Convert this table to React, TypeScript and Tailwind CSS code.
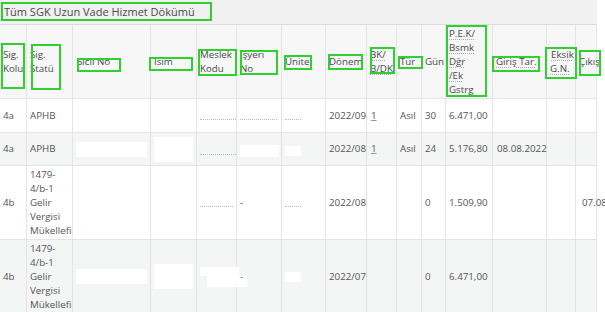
import React from "react";

const cols =
  "grid grid-cols-[27px_46px_78px_46px_40px_45px_44px_41px_30px_25px_24px_47px_54px_29px_21px]";

const cell = "border-r border-b border-[#e4e4e4] px-[3px] flex items-center";

// green annotation boxes drawn over the screenshot
const marks = [
  { x: 1, y: 2, w: 211, h: 19 },
  { x: 1, y: 43, w: 24, h: 46 },
  { x: 31, y: 44, w: 30, h: 46 },
  { x: 77, y: 58, w: 44, h: 14 },
  { x: 149, y: 57, w: 44, h: 14 },
  { x: 198, y: 49, w: 39, h: 27 },
  { x: 240, y: 50, w: 38, h: 25 },
  { x: 284, y: 55, w: 28, h: 15 },
  { x: 328, y: 54, w: 35, h: 16 },
  { x: 370, y: 47, w: 25, h: 27 },
  { x: 398, y: 56, w: 25, h: 13 },
  { x: 446, y: 25, w: 41, h: 72 },
  { x: 492, y: 56, w: 48, h: 16 },
  { x: 545, y: 47, w: 32, h: 32 },
  { x: 579, y: 50, w: 22, h: 26 },
];

const dotted = "underline decoration-dotted decoration-[#aaa] underline-offset-2";

const headers: React.ReactNode[] = [
  <>Sig.<br />Kolu</>,
  <>Sig.<br />Statü</>,
  <span className="pl-[1px]">Sicil No</span>,
  "Isim",
  <>Meslek<br />Kodu</>,
  <>İşyeri<br />No</>,
  "Ünite",
  "Dönem",
  <span className={dotted}>BK/<br />B/DK</span>,
  <span className={dotted}>Tür</span>,
  "Gün",
  <span className={dotted}>P.E.K/<br />Bsmk<br />Dğr<br />/Ek<br />Gstrg</span>,
  <span className={`${dotted} whitespace-nowrap`}>Giriş Tar.</span>,
  <span className={`${dotted} pl-[1px]`}>Eksik<br />G.N.</span>,
  <span className="whitespace-nowrap">Çıkış</span>,
];

const Dots = ({ w }: { w: number }) => (
  <div className="border-b border-dotted border-[#bbb]" style={{ width: w }} />
);

const Blank = ({ w, h }: { w: number; h: number }) => (
  <div className="bg-white" style={{ width: w, height: h }} />
);

const statu4b = (
  <>1479-<br />4/b-1<br />Gelir<br />Vergisi<br />Mükellefi</>
);

type Row = { h: number; gray: boolean; cells: React.ReactNode[] };

const rows: Row[] = [
  {
    h: 34,
    gray: false,
    cells: [
      "4a",
      "APHB",
      "",
      "",
      <div className="pt-[8px]"><Dots w={36} /></div>,
      <div className="pt-[8px]"><Dots w={37} /></div>,
      <div className="pt-[8px]"><Dots w={16} /></div>,
      "2022/09",
      <span className="underline decoration-[#999] pl-[1px]">1</span>,
      "Asıl",
      "30",
      "6.471,00",
      "",
      "",
      "",
    ],
  },
  {
    h: 33,
    gray: true,
    cells: [
      "4a",
      "APHB",
      <Blank w={73} h={15} />,
      <Blank w={41} h={25} />,
      <div className="pt-[10px]"><Dots w={36} /></div>,
      <div className="pt-[4px]"><Blank w={39} h={12} /></div>,
      <div className="pt-[4px]"><Blank w={16} h={10} /></div>,
      "2022/08",
      <span className="underline decoration-[#999] pl-[1px]">1</span>,
      "Asıl",
      "24",
      "5.176,80",
      <span className="whitespace-nowrap pl-[1px]">08.08.2022</span>,
      "",
      "",
    ],
  },
  {
    h: 74,
    gray: false,
    cells: [
      "4b",
      statu4b,
      "",
      "",
      <div className="pt-[8px]"><Dots w={33} /></div>,
      "-",
      <div className="pt-[8px]"><Dots w={16} /></div>,
      "2022/08",
      "",
      "",
      "0",
      "1.509,90",
      "",
      "",
      <span className="whitespace-nowrap pl-[3px]">07.08.2022</span>,
    ],
  },
  {
    h: 74,
    gray: true,
    cells: [
      "4b",
      statu4b,
      <Blank w={74} h={15} />,
      <Blank w={39} h={25} />,
      <div className="flex flex-col">
        <Blank w={39} h={9} />
        <div className="ml-[7px] -mr-[8px]"><Blank w={40} h={11} /></div>
      </div>,
      "-",
      <Blank w={16} h={10} />,
      "2022/07",
      "",
      "",
      "0",
      "6.471,00",
      "",
      "",
      "",
    ],
  },
];

export default function App() {
  return (
    <div
      className="relative w-[605px] h-[312px] overflow-hidden bg-white text-[#555] text-[9.75px] leading-[14px]"
      style={{ fontFamily: '"Open Sans", "Noto Sans", sans-serif' }}
    >
      <div className="w-[597px]">
        <div className="h-[25px] bg-[#f1f1f1] border-b border-[#dcdcdc] flex items-center pl-[4px] text-[11px] text-[#4a4a4a]">
          Tüm SGK Uzun Vade Hizmet Dökümü
        </div>

        <div className={`${cols} h-[74px] bg-[#f7f7f7] text-[#4a4a4a]`}>
          {headers.map((h, i) => (
            <div key={i} className={cell}>
              <div>{h}</div>
            </div>
          ))}
        </div>

        {rows.map((r, ri) => (
          <div
            key={ri}
            className={`${cols} ${r.gray ? "bg-[#f4f5f5]" : "bg-white"}`}
            style={{ height: r.h }}
          >
            {r.cells.map((c, ci) => (
              <div key={ci} className={`${cell} overflow-visible`}>
                {c}
              </div>
            ))}
          </div>
        ))}
      </div>

      {marks.map((m, i) => (
        <div
          key={i}
          className="absolute border-2 border-[#2fd12f] pointer-events-none"
          style={{ left: m.x, top: m.y, width: m.w, height: m.h }}
        />
      ))}
    </div>
  );
}
